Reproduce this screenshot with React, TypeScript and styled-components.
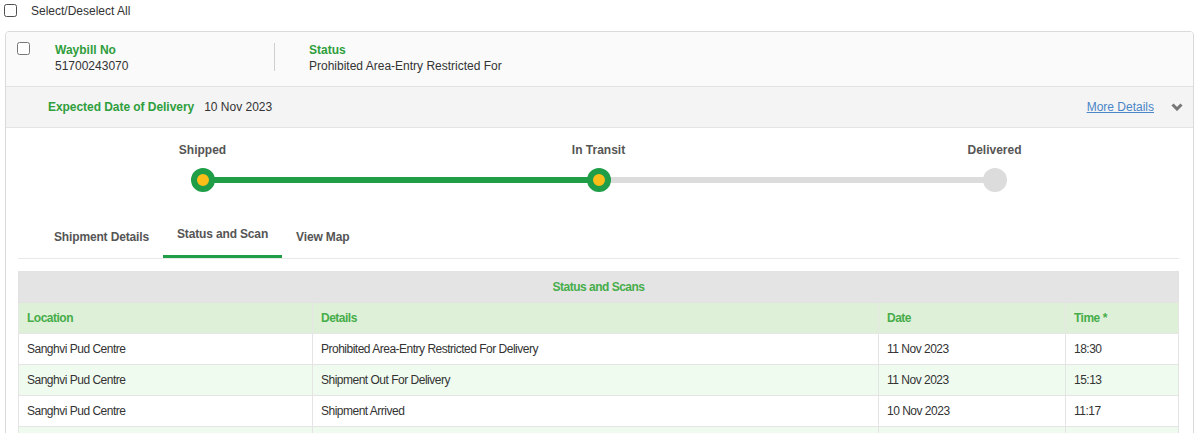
import React from "react";
import styled, { createGlobalStyle } from "styled-components";

const Global = createGlobalStyle`
  html, body { margin: 0; padding: 0; background: #fff; }
  body {
    font-family: "Liberation Sans", Arial, sans-serif;
    font-size: 12px;
    color: #333;
  }
  * { box-sizing: border-box; }
`;

const Page = styled.div`
  width: 1200px;
`;

const SelectAllRow = styled.label`
  display: flex;
  align-items: center;
  height: 21px;
  input { margin: 3px 3px 3px 4px; }
`;

const SelectAllText = styled.span`
  margin-left: 11px;
  line-height: 14px;
`;

const Card = styled.div`
  margin: 10px 6px 0 5px;
  border: 1px solid #dadada;
  border-radius: 4px;
  overflow: hidden;
`;

const CardHeader = styled.div`
  display: flex;
  align-items: flex-start;
  height: 55px;
  background: #fafafa;
  border-bottom: 1px solid #e2e2e2;
  input { margin: 10px 0 0 11px; }
`;

const Field = styled.div<{ $w?: number; $pl?: number }>`
  width: ${(p) => (p.$w ? `${p.$w}px` : "auto")};
  padding-left: ${(p) => p.$pl ?? 0}px;
  padding-top: 10px;
`;

const FieldLabel = styled.div`
  color: #2f9e3c;
  font-weight: bold;
  line-height: 16px;
`;

const FieldValue = styled.div`
  line-height: 16px;
`;

const Divider = styled.div`
  width: 1px;
  height: 28px;
  margin-top: 11px;
  background: #cfcfcf;
`;

const ExpectedRow = styled.div`
  display: flex;
  align-items: center;
  height: 41px;
  padding: 0 10px 0 42px;
  background: #f4f4f4;
  border-bottom: 1px solid #e4e4e4;
`;

const ExpectedLabel = styled.span`
  color: #2f9e3c;
  font-weight: bold;
  letter-spacing: -0.05px;
`;

const ExpectedValue = styled.span`
  margin-left: 10px;
`;

const MoreLink = styled.a`
  margin-left: auto;
  color: #4a86c8;
  text-decoration: underline;
  cursor: pointer;
`;

const Chevron = styled.svg`
  display: block;
  margin-left: 17px;
  width: 12px;
  height: 8px;
`;

const CardBody = styled.div`
  padding: 15px 14px 0 12px;
`;

const Tracker = styled.div`
  display: grid;
  grid-template-columns: 24px 1fr 24px 1fr 24px;
  grid-template-rows: 14px 24px;
  row-gap: 11px;
  width: 816px;
  margin: 0 auto;
`;

const StepLabel = styled.div<{ $col: number }>`
  grid-row: 1;
  grid-column: ${(p) => p.$col};
  display: flex;
  justify-content: center;
  white-space: nowrap;
  font-weight: bold;
  color: #555;
  line-height: 14px;
`;

const Dot = styled.div<{ $col: number; $done: boolean }>`
  grid-row: 2;
  grid-column: ${(p) => p.$col};
  width: 24px;
  height: 24px;
  border-radius: 50%;
  background: ${(p) => (p.$done ? "#fbbd18" : "#dcdcdc")};
  border: ${(p) => (p.$done ? "6px solid #1f9d47" : "none")};
  position: relative;
  z-index: 1;
`;

const Bar = styled.div<{ $col: number; $done: boolean }>`
  grid-row: 2;
  grid-column: ${(p) => p.$col};
  align-self: center;
  height: 6px;
  margin: 0 -2px;
  background: ${(p) => (p.$done ? "#1f9d47" : "#dcdcdc")};
`;

const TabBar = styled.div`
  display: flex;
  align-items: flex-end;
  margin-top: 25px;
  padding-left: 22px;
  border-bottom: 1px solid #e8e8e8;
`;

const Tab = styled.div<{ $active?: boolean }>`
  padding: 10px 14px 14px;
  font-weight: bold;
  color: #555;
  line-height: 14px;
  letter-spacing: -0.15px;
  border-bottom: ${(p) => (p.$active ? "3px solid #1f9d47" : "0")};
  cursor: pointer;
`;

const Table = styled.table`
  width: 100%;
  margin-top: 12px;
  border-collapse: collapse;
  letter-spacing: -0.5px;
  border: 1px solid #e2e2e2;
`;

const TitleCell = styled.th`
  background: #e4e4e4;
  color: #46ad4a;
  font-weight: bold;
  text-align: center;
  padding: 8px;
  line-height: 14px;
  border: 1px solid #e2e2e2;
`;

const HeadCell = styled.th`
  background: #dff0d8;
  color: #46ad4a;
  font-weight: bold;
  text-align: left;
  padding: 8px;
  line-height: 14px;
  border: 1px solid #e6e6e6;
`;

const Row = styled.tr<{ $alt: boolean }>`
  background: ${(p) => (p.$alt ? "#f0fbf0" : "#fff")};
`;

const Cell = styled.td`
  padding: 8px;
  line-height: 14px;
  border: 1px solid #e4e4e4;
  color: #333;
`;

const scans = [
  ["Sanghvi Pud Centre", "Prohibited Area-Entry Restricted For Delivery", "11 Nov 2023", "18:30"],
  ["Sanghvi Pud Centre", "Shipment Out For Delivery", "11 Nov 2023", "15:13"],
  ["Sanghvi Pud Centre", "Shipment Arrived", "10 Nov 2023", "11:17"],
  ["Pune Hub", "Shipment In Transit", "10 Nov 2023", "06:42"],
];

export default function App() {
  return (
    <Page>
      <Global />
      <SelectAllRow>
        <input type="checkbox" />
        <SelectAllText>Select/Deselect All</SelectAllText>
      </SelectAllRow>
      <Card>
        <CardHeader>
          <input type="checkbox" />
          <Field $w={244} $pl={25}>
            <FieldLabel>Waybill No</FieldLabel>
            <FieldValue>51700243070</FieldValue>
          </Field>
          <Divider />
          <Field $pl={34}>
            <FieldLabel>Status</FieldLabel>
            <FieldValue>Prohibited Area-Entry Restricted For</FieldValue>
          </Field>
        </CardHeader>
        <ExpectedRow>
          <ExpectedLabel>Expected Date of Delivery</ExpectedLabel>
          <ExpectedValue>10 Nov 2023</ExpectedValue>
          <MoreLink>More Details</MoreLink>
          <Chevron viewBox="0 0 12 8">
            <path d="M1.5 1.5 L6 6 L10.5 1.5" fill="none" stroke="#777" strokeWidth="3" strokeLinecap="butt" strokeLinejoin="miter" />
          </Chevron>
        </ExpectedRow>
        <CardBody>
          <Tracker>
            <StepLabel $col={1}>Shipped</StepLabel>
            <StepLabel $col={3}>In Transit</StepLabel>
            <StepLabel $col={5}>Delivered</StepLabel>
            <Dot $col={1} $done />
            <Bar $col={2} $done />
            <Dot $col={3} $done />
            <Bar $col={4} $done={false} />
            <Dot $col={5} $done={false} />
          </Tracker>
          <TabBar>
            <Tab>Shipment Details</Tab>
            <Tab $active>Status and Scan</Tab>
            <Tab>View Map</Tab>
          </TabBar>
          <Table>
            <colgroup>
              <col style={{ width: "294px" }} />
              <col style={{ width: "566px" }} />
              <col style={{ width: "187px" }} />
              <col />
            </colgroup>
            <thead>
              <tr>
                <TitleCell colSpan={4}>Status and Scans</TitleCell>
              </tr>
              <tr>
                <HeadCell>Location</HeadCell>
                <HeadCell>Details</HeadCell>
                <HeadCell>Date</HeadCell>
                <HeadCell>Time *</HeadCell>
              </tr>
            </thead>
            <tbody>
              {scans.map((r, i) => (
                <Row key={i} $alt={i % 2 === 1}>
                  {r.map((c, j) => (
                    <Cell key={j}>{c}</Cell>
                  ))}
                </Row>
              ))}
            </tbody>
          </Table>
        </CardBody>
      </Card>
    </Page>
  );
}
